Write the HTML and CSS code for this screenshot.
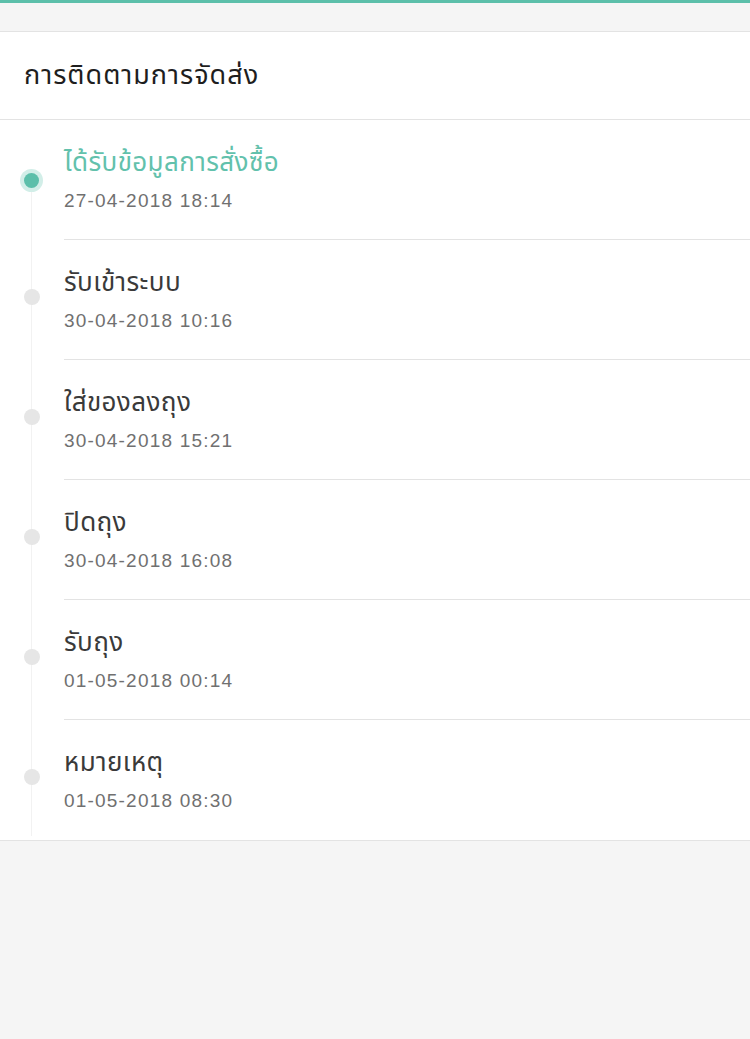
FILE: index.html
```html
<!DOCTYPE html>
<html lang="th">
<head>
<meta charset="utf-8">
<title>การติดตามการจัดส่ง</title>
<link rel="stylesheet" href="styles.css">
</head>
<body>
<div class="topbar"></div>
<div class="spacer"></div>
<section class="card">
  <header class="card-header">การติดตามการจัดส่ง</header>
  <ul class="timeline">
    <li class="step active">
      <div class="marker"><span class="dot"></span></div>
      <div class="content">
        <div class="title">ได้รับข้อมูลการสั่งซื้อ</div>
        <div class="date">27-04-2018 18:14</div>
      </div>
    </li>
    <li class="step">
      <div class="marker"><span class="dot"></span></div>
      <div class="content">
        <div class="title">รับเข้าระบบ</div>
        <div class="date">30-04-2018 10:16</div>
      </div>
    </li>
    <li class="step">
      <div class="marker"><span class="dot"></span></div>
      <div class="content">
        <div class="title">ใส่ของลงถุง</div>
        <div class="date">30-04-2018 15:21</div>
      </div>
    </li>
    <li class="step">
      <div class="marker"><span class="dot"></span></div>
      <div class="content">
        <div class="title">ปิดถุง</div>
        <div class="date">30-04-2018 16:08</div>
      </div>
    </li>
    <li class="step">
      <div class="marker"><span class="dot"></span></div>
      <div class="content">
        <div class="title">รับถุง</div>
        <div class="date">01-05-2018 00:14</div>
      </div>
    </li>
    <li class="step last">
      <div class="marker"><span class="dot"></span></div>
      <div class="content">
        <div class="title">หมายเหตุ</div>
        <div class="date">01-05-2018 08:30</div>
      </div>
    </li>
  </ul>
</section>
</body>
</html>
```
FILE: styles.css
```css
html, body {
  margin: 0;
  padding: 0;
}
body {
  background: #f5f5f5;
  font-family: "Noto Sans Thai", "Loma", "Garuda", "DejaVu Sans", sans-serif;
  width: 750px;
  height: 1039px;
  overflow: hidden;
}
.topbar {
  height: 3px;
  background: #5cbfaa;
}
.spacer {
  height: 28px;
}
.card {
  background: #fff;
  border-top: 1px solid #e3e3e3;
  border-bottom: 1px solid #e3e3e3;
}
.card-header {
  height: 88px;
  box-sizing: border-box;
  border-bottom: 1px solid #e3e3e3;
  padding-left: 24px;
  display: flex;
  align-items: center;
  font-size: 27px;
  letter-spacing: 1px;
  color: #1e1e1e;
}
.timeline {
  list-style: none;
  margin: 0;
  padding: 0;
  position: relative;
}
.timeline::before {
  content: "";
  position: absolute;
  left: 31px;
  top: 70px;
  bottom: 4px;
  width: 1px;
  background: #f2f2f2;
}
.step {
  display: flex;
  height: 120px;
}
.marker {
  width: 64px;
  flex: none;
  position: relative;
  z-index: 1;
}
.dot {
  display: block;
  width: 16px;
  height: 16px;
  border-radius: 50%;
  background: #e6e6e6;
  margin: 49px 0 0 24px;
}
.active .dot {
  background: #5cbfaa;
  box-shadow: 0 0 0 4px #d2eee8;
  margin-top: 53px;
  width: 15px;
  height: 15px;
}
.content {
  flex: 1;
  border-bottom: 1px solid #e3e3e3;
  padding-top: 28px;
  box-sizing: border-box;
}
.last .content {
  border-bottom: none;
}
.title {
  font-size: 26px;
  line-height: 30px;
  letter-spacing: 0.4px;
  color: #3a3a3a;
}
.active .title {
  color: #62c1ac;
}
.date {
  margin-top: 11px;
  font-family: "Liberation Sans", Arial, sans-serif;
  font-size: 19px;
  line-height: 24px;
  color: #707070;
  letter-spacing: 1.2px;
}
```
